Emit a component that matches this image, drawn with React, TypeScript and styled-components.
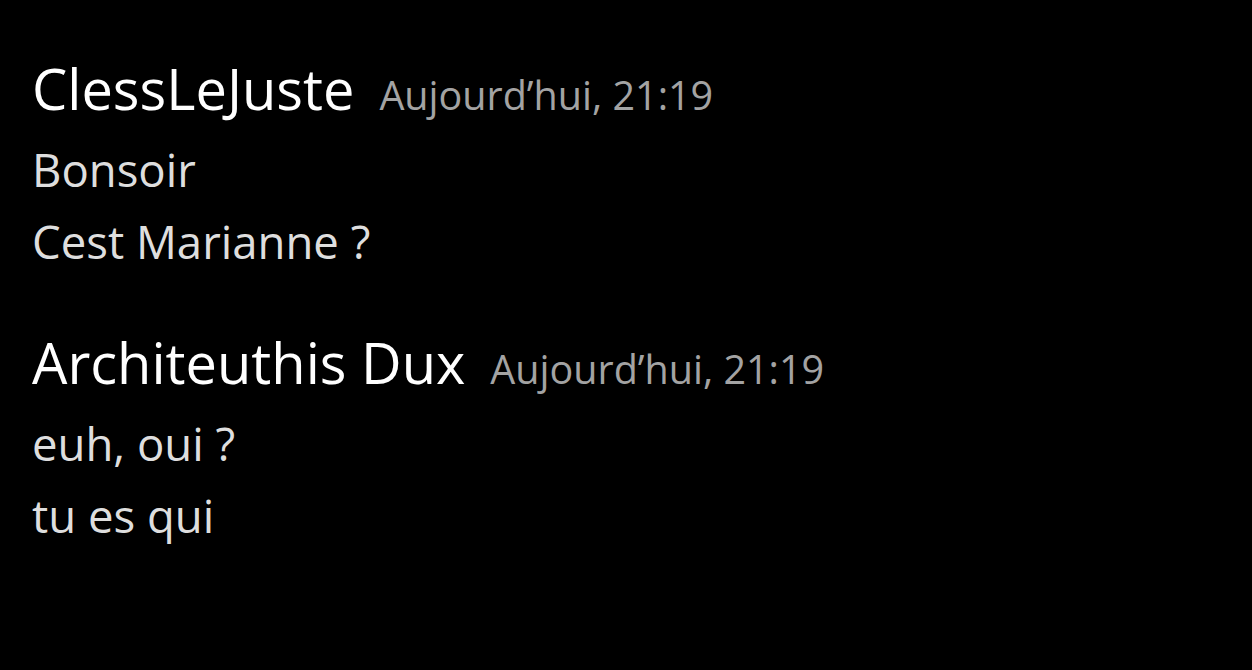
import React from "react";
import styled, { createGlobalStyle } from "styled-components";

const GlobalStyle = createGlobalStyle`
  html, body {
    margin: 0;
    padding: 0;
    background: #000;
  }
  body {
    font-family: "Open Sans", "Noto Sans", sans-serif;
  }
`;

interface Message {
  author: string;
  time: string;
  lines: string[];
}

const messages: Message[] = [
  {
    author: "ClessLeJuste",
    time: "Aujourd’hui, 21:19",
    lines: ["Bonsoir", "Cest Marianne ?"],
  },
  {
    author: "Architeuthis Dux",
    time: "Aujourd’hui, 21:19",
    lines: ["euh, oui ?", "tu es qui"],
  },
];

const App: React.FC = () => {
  return (
    <>
      <GlobalStyle />
      <Chat>
        {messages.map((m, i) => (
          <Group key={i}>
            <Header>
              <Author>{m.author}</Author>
              <Time>{m.time}</Time>
            </Header>
            {m.lines.map((line, j) => (
              <Line key={j}>{line}</Line>
            ))}
          </Group>
        ))}
      </Chat>
    </>
  );
};

export default App;

const Chat = styled.div`
  width: 1252px;
  height: 670px;
  box-sizing: border-box;
  padding: 52px 0 0 32px;
  display: flex;
  flex-direction: column;
  gap: 49px;
  background: #000;
`;

const Group = styled.div`
  display: flex;
  flex-direction: column;
`;

const Header = styled.div`
  display: flex;
  align-items: baseline;
  gap: 25px;
  height: 72px;
  margin-bottom: 9px;
`;

const Author = styled.span`
  font-size: 56px;
  color: #fff;
  line-height: 72px;
`;

const Time = styled.span`
  font-size: 39.5px;
  color: #a3a3a3;
  line-height: 72px;
`;

const Line = styled.div`
  font-size: 45.5px;
  color: #dedede;
  line-height: 72px;
`;
